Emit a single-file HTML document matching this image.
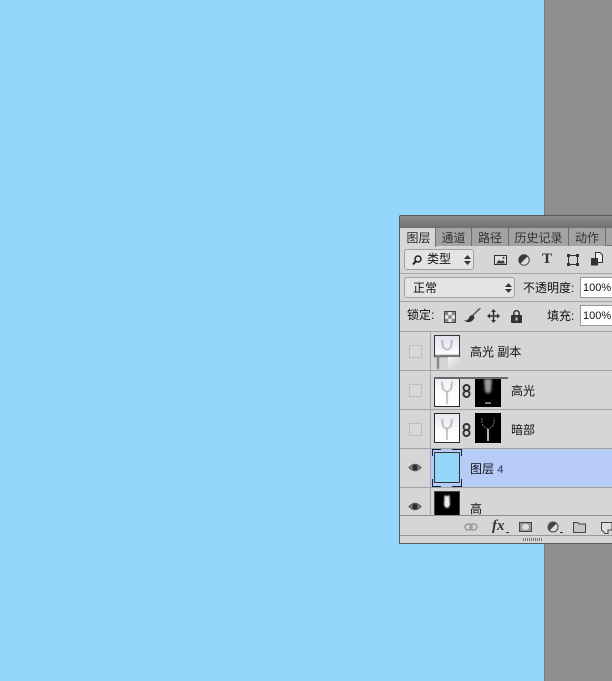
<!DOCTYPE html>
<html><head><meta charset="utf-8">
<style>
html,body{margin:0;padding:0}
body{width:612px;height:681px;overflow:hidden;position:relative;background:#93d5fb;font-family:"Liberation Sans","WenQuanYi Zen Hei","Noto Sans CJK SC",sans-serif;color:#111}
div,span,svg{position:absolute;box-sizing:border-box}
.t{white-space:nowrap;line-height:14px;font-size:12px}
.tab{top:228px;height:18px;background:#a3a3a3;border-right:1px solid #6f6f6f;color:#333;font-size:12px;line-height:20px;text-align:center;white-space:nowrap}
.cb{left:409px;width:13px;height:13px;border:1px solid #bdbdbd;background:#d8d8d8}
.th{border:1px solid #2a2a2a;background:#fff;width:26px;height:30px;overflow:hidden}
.pct{left:580px;width:32px;height:21px;background:#fff;border:1px solid #999;border-right:0;font-size:11px;line-height:21px;padding-left:2px;color:#111;overflow:hidden}
</style></head><body>
<div style="left:544px;top:0;width:68px;height:681px;background:#8f8f8f;border-left:1px solid #7b7b7b"></div>

<div style="left:399px;top:215px;width:213px;height:329px;background:#d6d6d6;border:1px solid #5a5a5a;border-right:0;border-top-left-radius:2px"></div>
<div style="left:400px;top:216px;width:212px;height:13px;background:linear-gradient(#8a8a8a,#6e6e6e)"></div>
<div style="left:400px;top:228px;width:212px;height:18px;background:#a3a3a3;border-bottom:1px solid #777"></div>

<div style="left:400px;top:228px;width:36px;height:19px;background:#d6d6d6;border-right:1px solid #6f6f6f;font-size:12px;line-height:20px;text-align:center;padding-left:2px;color:#222">图层</div>
<div class="tab" style="left:436px;width:36px">通道</div>
<div class="tab" style="left:472px;width:37px">路径</div>
<div class="tab" style="left:509px;width:60px">历史记录</div>
<div class="tab" style="left:569px;width:37px">动作</div>

<!-- kind filter -->
<div style="left:404px;top:249px;width:70px;height:21px;background:#e4e4e4;border:1px solid #a0a0a0;border-radius:3px"></div>
<svg style="left:411px;top:254px" width="12" height="12" viewBox="0 0 12 12"><circle cx="7" cy="5" r="3" fill="none" stroke="#222" stroke-width="1.500"/><path d="M4.800 7.200L2 10.500" stroke="#222" stroke-width="2"/></svg>
<div class="t" style="left:427px;top:252px">类型</div>
<svg style="left:464px;top:255px" width="7" height="10" viewBox="0 0 7 10"><path d="M3.500 0L7 4H0zM3.500 10L0 6H7z" fill="#333"/></svg>

<svg style="left:494px;top:255px" width="13" height="10" viewBox="0 0 13 10"><rect x=".5" y=".5" width="12" height="9" fill="#ddd" stroke="#333"/><path d="M2 8.500L5 5L7 6.500L9 5L11 8.500Z" fill="#333"/><circle cx="9.500" cy="2.800" r="1" fill="#333"/></svg>
<svg style="left:518px;top:254px" width="12" height="12" viewBox="0 0 12 12"><circle cx="6" cy="6" r="5.200" fill="#ddd" stroke="#444"/><path d="M9.700 2.300A5.200 5.200 0 0 0 2.300 9.700Z" fill="#3a3a3a"/></svg>
<div style="left:542px;top:251px;font:bold 15px/17px 'Liberation Serif',serif;color:#333">T</div>
<svg style="left:567px;top:254px" width="12" height="12" viewBox="0 0 12 12"><rect x="1.500" y="1.500" width="9" height="9" fill="none" stroke="#333"/><path d="M0 0h3v3H0zM9 0h3v3H9zM0 9h3v3H0zM9 9h3v3H9z" fill="#333"/></svg>
<svg style="left:591px;top:252px" width="12" height="14" viewBox="0 0 12 14"><path d="M4.500.5H9L11.500 3V10.500H4.500Z" fill="#eee" stroke="#333"/><rect x=".5" y="6.500" width="6" height="6.500" fill="#333" stroke="#333"/></svg>

<div style="left:400px;top:273px;width:212px;height:1px;background:#a6a6a6"></div>

<!-- blend mode -->
<div style="left:404px;top:277px;width:111px;height:21px;background:#e4e4e4;border:1px solid #a0a0a0;border-radius:3px"></div>
<div class="t" style="left:413px;top:281px">正常</div>
<svg style="left:505px;top:283px" width="7" height="10" viewBox="0 0 7 10"><path d="M3.500 0L7 4H0zM3.500 10L0 6H7z" fill="#333"/></svg>
<div class="t" style="left:523px;top:281px">不透明度:</div>
<div class="pct" style="top:277px">100%</div>

<div style="left:400px;top:301px;width:212px;height:1px;background:#a6a6a6"></div>

<!-- lock -->
<div class="t" style="left:407px;top:308px">锁定:</div>
<svg style="left:444px;top:311px" width="12" height="12" viewBox="0 0 12 12"><rect x=".5" y=".5" width="11" height="11" fill="#e8e8e8" stroke="#444"/><path d="M1 1h3.300v3.300H1zM7.700 1H11v3.300H7.700zM4.300 4.300h3.400v3.400H4.300zM1 7.700h3.300V11H1zM7.700 7.700H11V11H7.700z" fill="#888"/></svg>
<svg style="left:464px;top:308px" width="17" height="15" viewBox="0 0 17 15"><path d="M16.500 0L8 8" stroke="#555" stroke-width="1.500"/><path d="M9.500 7.500C5 6 5.500 11 3 12C2 12.500 1 12.500 0 12.500C3 15 8.500 15 10.500 9.500Z" fill="#333"/></svg>
<svg style="left:487px;top:309px" width="13" height="14" viewBox="0 0 13 14"><path d="M6.500 1V13M1 7H12" stroke="#333" stroke-width="1.500"/><path d="M6.500 0L9 3H4zM6.500 14L4 11H9zM0 7L3 4.500V9.500zM13 7L10 4.500V9.500z" fill="#333"/></svg>
<svg style="left:511px;top:310px" width="11" height="13" viewBox="0 0 11 13"><rect x="0" y="5" width="11" height="8" rx="1" fill="#333"/><path d="M2.800 6V3.300a2.700 2.700 0 0 1 5.400 0V6" fill="none" stroke="#333" stroke-width="1.500"/><rect x="4.500" y="7.500" width="2" height="3" fill="#ccc"/></svg>
<div class="t" style="left:547px;top:309px">填充:</div>
<div class="pct" style="top:305px">100%</div>

<div style="left:400px;top:331px;width:212px;height:1px;background:#a2a2a2"></div>
<div style="left:430px;top:332px;width:1px;height:184px;background:#a8a8a8"></div>

<!-- row 1 -->
<div class="cb" style="top:345px"></div>
<div class="th" style="left:434px;top:335px;height:22px;background:linear-gradient(#e0e2ef,#fff);border-color:#333;border-bottom:0"></div>
<svg style="left:434px;top:335px;filter:blur(.4px)" width="26" height="36" viewBox="0 0 26 36"><path d="M8 5L9 12Q13 17 17 12L18 5" fill="none" stroke="#888"/><path d="M0 21H26" stroke="#555" stroke-width="2"/><path d="M4 20V34" stroke="#777" stroke-width="2"/></svg>
<div style="left:448px;top:357px;width:12px;height:12px;background:linear-gradient(135deg,#f4f4f4,#d6d6d6 70%)"></div>
<div class="t" style="left:470px;top:345px">高光 副本</div>
<div style="left:400px;top:370px;width:212px;height:1px;background:#a2a2a2"></div>

<!-- row 2 -->
<div class="cb" style="top:384px"></div>
<div class="th" style="left:434px;top:377px;height:30px;background:linear-gradient(#eef0f6,#fff 60%)">
  <svg style="left:0;top:0;filter:blur(.4px)" width="24" height="28" viewBox="0 0 24 28"><path d="M7 4L8 11Q12 16 16 11L17 4M12 14V26" fill="none" stroke="#888"/></svg>
</div>
<div style="left:434px;top:377px;width:74px;height:2px;background:#6a6a6a"></div>
<svg style="left:462px;top:384px" width="9" height="14" viewBox="0 0 9 14"><rect x="1.500" y="1" width="6" height="6" rx="3" fill="none" stroke="#333" stroke-width="2"/><rect x="1.500" y="7" width="6" height="6" rx="3" fill="none" stroke="#333" stroke-width="2"/></svg>
<div style="left:475px;top:379px;width:26px;height:28px;background:#000"></div>
<svg style="left:475px;top:377px" width="26" height="30" viewBox="0 0 26 30"><path d="M9 2L10 14Q13 19 16 14L17 2Z" fill="#999" style="filter:blur(1px)"/><path d="M10 26H16" stroke="#eee"/></svg>
<div class="t" style="left:511px;top:384px">高光</div>
<div style="left:400px;top:409px;width:212px;height:1px;background:#a2a2a2"></div>

<!-- row 3 -->
<div class="cb" style="top:423px"></div>
<div class="th" style="left:434px;top:413px;background:linear-gradient(#e6e8f2,#fff 70%)">
  <svg style="left:0;top:0;filter:blur(.4px)" width="24" height="28" viewBox="0 0 24 28"><path d="M7 5L8 12Q12 17 16 12L17 5M12 15V26" fill="none" stroke="#888"/></svg>
</div>
<svg style="left:462px;top:423px" width="9" height="14" viewBox="0 0 9 14"><rect x="1.500" y="1" width="6" height="6" rx="3" fill="none" stroke="#333" stroke-width="2"/><rect x="1.500" y="7" width="6" height="6" rx="3" fill="none" stroke="#333" stroke-width="2"/></svg>
<div style="left:475px;top:413px;width:26px;height:30px;background:#000"></div>
<svg style="left:475px;top:413px" width="26" height="30" viewBox="0 0 26 30"><path d="M7 5Q6 14 13 16Q20 14 19 5" fill="none" stroke="#777" stroke-dasharray="2 1"/><path d="M13 16V28" stroke="#eee" stroke-width="1.500"/></svg>
<div class="t" style="left:511px;top:423px">暗部</div>
<div style="left:400px;top:448px;width:212px;height:1px;background:#a2a2a2"></div>

<!-- selected -->
<div style="left:431px;top:449px;width:181px;height:38px;background:#b6ccf6"></div>
<svg style="left:408px;top:462px" width="14" height="11" viewBox="0 0 14 11"><path d="M1 5.500Q7 -1 13 5.500Q7 12 1 5.500Z" fill="#8a8a8a" stroke="#555"/><circle cx="7" cy="5.500" r="2.800" fill="#2f2f2f"/></svg>
<div style="left:434px;top:452px;width:26px;height:31px;background:#93d5fb;border:1px solid #333"></div>
<svg style="left:432px;top:449px" width="30" height="38" viewBox="0 0 30 38"><path d="M.5 7V.5H9M20 .5H29.500V7M.5 30V37.500H9M20 37.500H29.500V30" fill="none" stroke="#0c1f3f" stroke-width="1"/></svg>
<div class="t" style="left:470px;top:462px">图层 <span style="position:static;font-size:11px;color:#223a7a">4</span></div>
<div style="left:400px;top:487px;width:212px;height:1px;background:#a2a2a2"></div>

<div style="left:400px;top:488px;width:212px;height:27px;overflow:hidden">
  <svg style="left:8px;top:13px" width="14" height="11" viewBox="0 0 14 11"><path d="M1 5.500Q7 -1 13 5.500Q7 12 1 5.500Z" fill="#8a8a8a" stroke="#555"/><circle cx="7" cy="5.500" r="2.800" fill="#2f2f2f"/></svg>
  <div style="left:34px;top:3px;width:26px;height:26px;background:#000;border:1px solid #444"></div>
  <svg style="left:34px;top:3px" width="26" height="26" viewBox="0 0 26 26"><path d="M10.500 4L10 14Q13 20 16 14L15.500 4Q13 6 10.500 4Z" fill="#eee" style="filter:blur(.8px)"/></svg>
  <div class="t" style="left:70px;top:14px">高</div>
</div>

<!-- footer -->
<div style="left:400px;top:515px;width:212px;height:1px;background:#8c8c8c"></div>
<svg style="left:464px;top:523px" width="14" height="8" viewBox="0 0 14 8"><rect x="1" y="1" width="7" height="6" rx="3" fill="none" stroke="#999" stroke-width="1.500"/><rect x="6" y="1" width="7" height="6" rx="3" fill="none" stroke="#999" stroke-width="1.500"/></svg>
<div style="left:492px;top:518px;font:italic bold 15px/16px 'Liberation Serif',serif;color:#333">fx</div>
<div style="left:506px;top:532px;width:3px;height:1px;background:#333"></div>
<div style="left:519px;top:522px;width:13px;height:10px;background:#999;border:1px solid #444"></div>
<div style="left:522px;top:524px;width:7px;height:6px;background:#ddd;border-radius:3px"></div>
<svg style="left:547px;top:521px" width="12" height="12" viewBox="0 0 12 12"><circle cx="6" cy="6" r="5" fill="#ddd" stroke="#444"/><path d="M9.500 2.500A5 5 0 0 0 2.500 9.500Z" fill="#444"/></svg>
<div style="left:560px;top:532px;width:3px;height:1px;background:#333"></div>
<svg style="left:573px;top:522px" width="13" height="11" viewBox="0 0 13 11"><path d="M.5 10.500V.5H5L6 2H12.500V10.500Z" fill="#c4c4c4" stroke="#444"/></svg>
<svg style="left:601px;top:522px" width="11" height="12" viewBox="0 0 11 12"><path d="M.5 .5H11V8H7V11.500H4L.5 8Z" fill="#ddd" stroke="#444"/></svg>
<div style="left:400px;top:535px;width:212px;height:1px;background:#9a9a9a"></div>
<div style="left:523px;top:538px;width:20px;height:3px;background:repeating-linear-gradient(90deg,#777 0 1px,transparent 1px 2px)"></div>
</body></html>
